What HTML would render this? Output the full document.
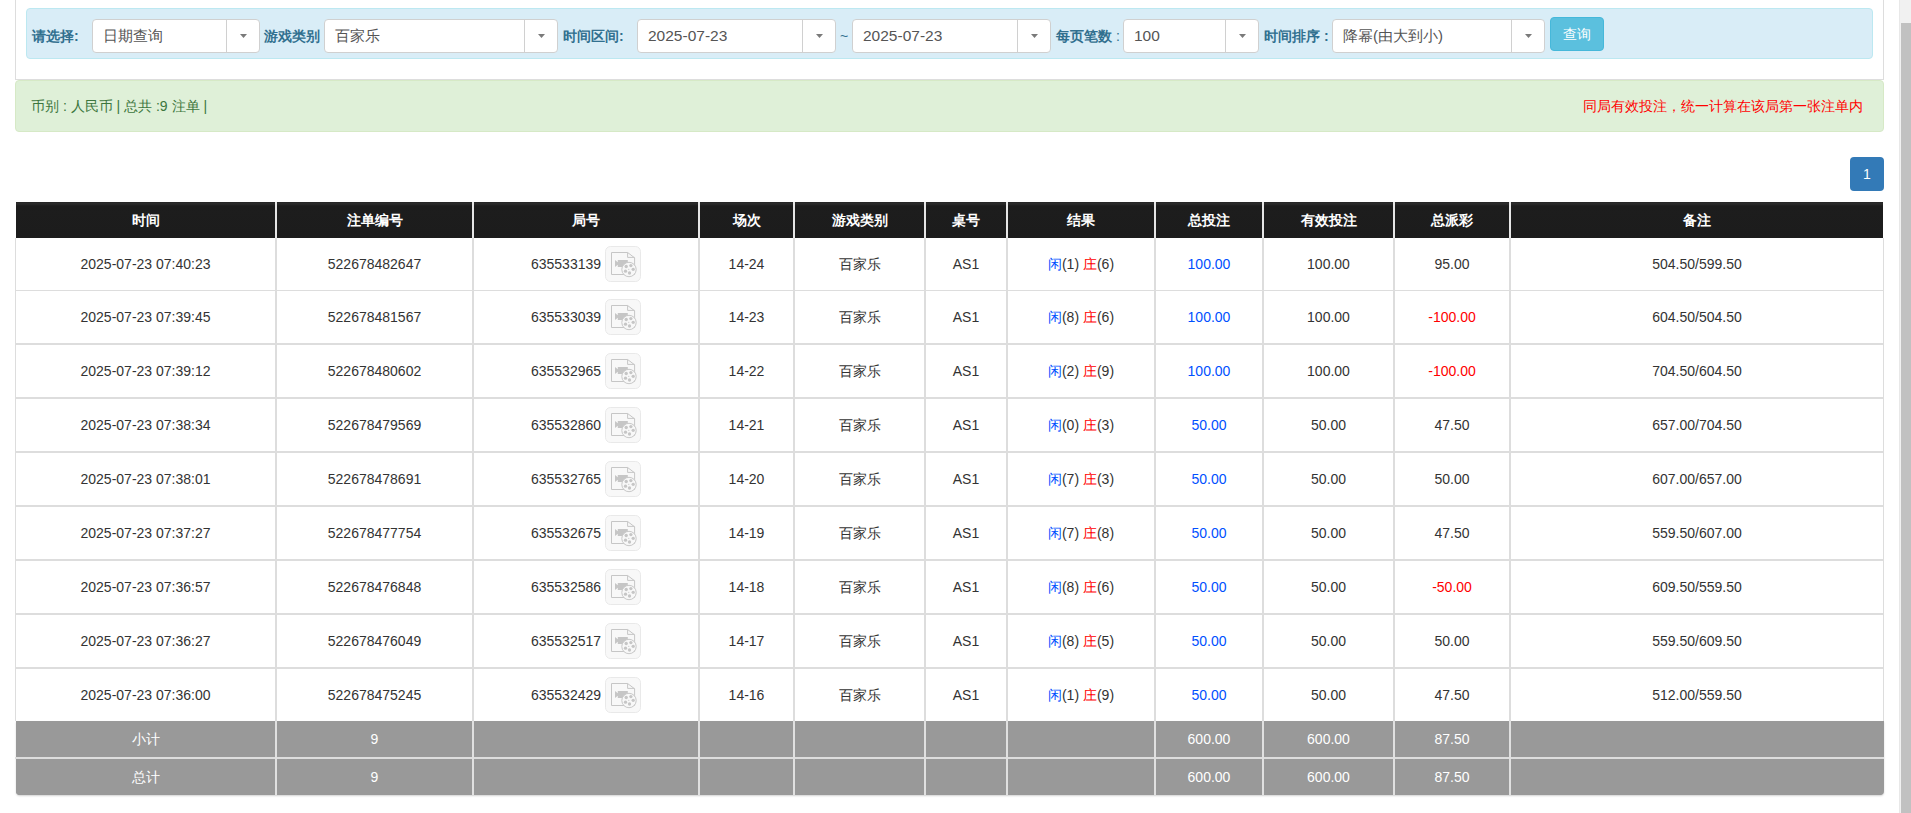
<!DOCTYPE html>
<html><head><meta charset="utf-8"><title>report</title>
<style>
*{box-sizing:border-box}
html,body{margin:0;padding:0}
body{width:1911px;height:813px;overflow:hidden;position:relative;background:#fff;font-family:"Liberation Sans",sans-serif;font-size:14px;color:#333}
.abs{position:absolute}
.panel{left:15px;top:-30px;width:1869px;height:110px;border:1px solid #ddd;border-top:none;background:#fff}
.bar{left:26px;top:8px;width:1847px;height:51px;background:#d9edf7;border:1px solid #bce8f1;border-radius:4px}
.lbl{position:absolute;top:19px;height:34px;line-height:34px;font-weight:bold;color:#31708f;white-space:nowrap}
.sel{position:absolute;top:19px;height:34px;border:1px solid #d0d0d0;border-radius:4px;background:#fff;color:#555}
.sel .t{position:absolute;left:10px;top:0;line-height:32px;white-space:nowrap;font-size:15px}
.sel .d{position:absolute;top:0;bottom:0;width:1px;background:#d0d0d0}
.sel .c{position:absolute;top:14px;display:block}
.btn{left:1550px;top:17px;width:54px;height:34px;background:#5bc0de;border:1px solid #46b8da;border-radius:4px;color:#fff;text-align:center;line-height:32px}
.alert{left:15px;top:80px;width:1869px;height:52px;background:#dff0d8;border:1px solid #d6e9c6;border-radius:4px;color:#3c763d}
.pg{left:1850px;top:157px;width:34px;height:34px;background:#337ab7;border-radius:4px;color:#fff;text-align:center;line-height:34px}
.hd{top:202px;height:36px;background:linear-gradient(#222 0,#2b2b2b 1px,#2a2a2a 2px,#1d1d1d 4px,#1c1c1c);color:#fff;font-weight:bold;text-align:center;line-height:36px;white-space:nowrap}
.cell{height:52px;line-height:52px;text-align:center;white-space:nowrap}
.tot{background:#999;color:#fff;text-align:center;white-space:nowrap;height:36px;line-height:36px}
.vl{background:#ddd}
.b{color:#0050ff}.r{color:#f00}
.ic{display:inline-block;vertical-align:middle;width:36px;height:36px;margin-left:4px;position:relative;top:-1px}
.ic svg{display:block}
.sb{left:1899px;top:0;width:12px;height:813px;background:#f1f1f1;border-left:1px solid #e8e8e8}
.th{left:1901px;top:23px;width:10px;height:800px;background:#c1c1c1}
</style></head><body>

<div class="abs panel"></div>
<div class="abs bar"></div>
<div class="lbl" style="left:32px;">请选择:</div>
<div class="lbl" style="left:264px;">游戏类别</div>
<div class="lbl" style="left:563px;">时间区间:</div>
<div class="lbl" style="left:840px;font-weight:normal;">~</div>
<div class="lbl" style="left:1056px;">每页笔数 <span style="font-weight:normal">:</span></div>
<div class="lbl" style="left:1264px;">时间排序 :</div>
<div class="sel" style="left:92px;width:168px"><span class="t" style="font-size:15px">日期查询</span><span class="d" style="left:133px"></span><svg class="c" style="left:147px" width="7" height="4"><path d="M0 0H7L3.5 4Z" fill="#7a7a7a"/></svg></div>
<div class="sel" style="left:324px;width:234px"><span class="t" style="font-size:15px">百家乐</span><span class="d" style="left:199px"></span><svg class="c" style="left:213px" width="7" height="4"><path d="M0 0H7L3.5 4Z" fill="#7a7a7a"/></svg></div>
<div class="sel" style="left:637px;width:199px"><span class="t" style="font-size:15.5px">2025-07-23</span><span class="d" style="left:164px"></span><svg class="c" style="left:178px" width="7" height="4"><path d="M0 0H7L3.5 4Z" fill="#7a7a7a"/></svg></div>
<div class="sel" style="left:852px;width:199px"><span class="t" style="font-size:15.5px">2025-07-23</span><span class="d" style="left:164px"></span><svg class="c" style="left:178px" width="7" height="4"><path d="M0 0H7L3.5 4Z" fill="#7a7a7a"/></svg></div>
<div class="sel" style="left:1123px;width:136px"><span class="t" style="font-size:15.5px">100</span><span class="d" style="left:101px"></span><svg class="c" style="left:115px" width="7" height="4"><path d="M0 0H7L3.5 4Z" fill="#7a7a7a"/></svg></div>
<div class="sel" style="left:1332px;width:213px"><span class="t" style="font-size:15px">降幂(由大到小)</span><span class="d" style="left:178px"></span><svg class="c" style="left:192px" width="7" height="4"><path d="M0 0H7L3.5 4Z" fill="#7a7a7a"/></svg></div>
<div class="abs btn">查询</div>
<div class="abs alert"><span class="abs" style="left:15px;top:0;line-height:50px">币别 : 人民币 | 总共 :9 注单 |</span><span class="abs r" style="right:20px;top:0;line-height:50px">同局有效投注，统一计算在该局第一张注单内</span></div>
<div class="abs pg">1</div>
<div class="abs hd" style="left:16px;width:259px">时间</div>
<div class="abs hd" style="left:277px;width:195px">注单编号</div>
<div class="abs hd" style="left:474px;width:224px">局号</div>
<div class="abs hd" style="left:700px;width:93px">场次</div>
<div class="abs hd" style="left:795px;width:129px">游戏类别</div>
<div class="abs hd" style="left:926px;width:80px">桌号</div>
<div class="abs hd" style="left:1008px;width:146px">结果</div>
<div class="abs hd" style="left:1156px;width:106px">总投注</div>
<div class="abs hd" style="left:1264px;width:129px">有效投注</div>
<div class="abs hd" style="left:1395px;width:114px">总派彩</div>
<div class="abs hd" style="left:1511px;width:372px">备注</div>
<div class="abs cell" style="left:16px;top:238px;width:259px">2025-07-23 07:40:23</div>
<div class="abs cell" style="left:277px;top:238px;width:195px">522678482647</div>
<div class="abs cell" style="left:474px;top:238px;width:224px">635533139<span class="ic"><svg width="36" height="36" viewBox="0 0 36 36"><rect x="0.5" y="0.5" width="35" height="35" rx="5" fill="#f8f8f8" stroke="#e9e9e9"/><path d="M6.5 6.5H22.6L29.6 11.8V28.5H6.5Z" fill="none" stroke="#c6c6c6"/><path d="M22.6 6.5V11.4H29.6" fill="none" stroke="#c6c6c6"/><path d="M10 14L12.8 16.2V14H22.8V21H12.8V18.8L10 21Z" fill="#c6c6c6"/><circle cx="24" cy="23.5" r="7.2" fill="#f8f8f8" stroke="#c8c8c8"/><g fill="#c6c6c6"><circle cx="21.2" cy="20.5" r="1.65"/><circle cx="25.9" cy="19.6" r="1.65"/><circle cx="28.2" cy="23.3" r="1.65"/><circle cx="24.5" cy="27" r="1.65"/><circle cx="20.5" cy="25.2" r="1.65"/><circle cx="23.8" cy="23.3" r="0.6"/></g></svg></span></div>
<div class="abs cell" style="left:700px;top:238px;width:93px">14-24</div>
<div class="abs cell" style="left:795px;top:238px;width:129px">百家乐</div>
<div class="abs cell" style="left:926px;top:238px;width:80px">AS1</div>
<div class="abs cell" style="left:1008px;top:238px;width:146px"><span class="b">闲</span>(1) <span class="r">庄</span>(6)</div>
<div class="abs cell" style="left:1156px;top:238px;width:106px"><span class="b">100.00</span></div>
<div class="abs cell" style="left:1264px;top:238px;width:129px">100.00</div>
<div class="abs cell" style="left:1395px;top:238px;width:114px">95.00</div>
<div class="abs cell" style="left:1511px;top:238px;width:372px">504.50/599.50</div>
<div class="abs cell" style="left:16px;top:291px;width:259px">2025-07-23 07:39:45</div>
<div class="abs cell" style="left:277px;top:291px;width:195px">522678481567</div>
<div class="abs cell" style="left:474px;top:291px;width:224px">635533039<span class="ic"><svg width="36" height="36" viewBox="0 0 36 36"><rect x="0.5" y="0.5" width="35" height="35" rx="5" fill="#f8f8f8" stroke="#e9e9e9"/><path d="M6.5 6.5H22.6L29.6 11.8V28.5H6.5Z" fill="none" stroke="#c6c6c6"/><path d="M22.6 6.5V11.4H29.6" fill="none" stroke="#c6c6c6"/><path d="M10 14L12.8 16.2V14H22.8V21H12.8V18.8L10 21Z" fill="#c6c6c6"/><circle cx="24" cy="23.5" r="7.2" fill="#f8f8f8" stroke="#c8c8c8"/><g fill="#c6c6c6"><circle cx="21.2" cy="20.5" r="1.65"/><circle cx="25.9" cy="19.6" r="1.65"/><circle cx="28.2" cy="23.3" r="1.65"/><circle cx="24.5" cy="27" r="1.65"/><circle cx="20.5" cy="25.2" r="1.65"/><circle cx="23.8" cy="23.3" r="0.6"/></g></svg></span></div>
<div class="abs cell" style="left:700px;top:291px;width:93px">14-23</div>
<div class="abs cell" style="left:795px;top:291px;width:129px">百家乐</div>
<div class="abs cell" style="left:926px;top:291px;width:80px">AS1</div>
<div class="abs cell" style="left:1008px;top:291px;width:146px"><span class="b">闲</span>(8) <span class="r">庄</span>(6)</div>
<div class="abs cell" style="left:1156px;top:291px;width:106px"><span class="b">100.00</span></div>
<div class="abs cell" style="left:1264px;top:291px;width:129px">100.00</div>
<div class="abs cell" style="left:1395px;top:291px;width:114px"><span class="r">-100.00</span></div>
<div class="abs cell" style="left:1511px;top:291px;width:372px">604.50/504.50</div>
<div class="abs cell" style="left:16px;top:345px;width:259px">2025-07-23 07:39:12</div>
<div class="abs cell" style="left:277px;top:345px;width:195px">522678480602</div>
<div class="abs cell" style="left:474px;top:345px;width:224px">635532965<span class="ic"><svg width="36" height="36" viewBox="0 0 36 36"><rect x="0.5" y="0.5" width="35" height="35" rx="5" fill="#f8f8f8" stroke="#e9e9e9"/><path d="M6.5 6.5H22.6L29.6 11.8V28.5H6.5Z" fill="none" stroke="#c6c6c6"/><path d="M22.6 6.5V11.4H29.6" fill="none" stroke="#c6c6c6"/><path d="M10 14L12.8 16.2V14H22.8V21H12.8V18.8L10 21Z" fill="#c6c6c6"/><circle cx="24" cy="23.5" r="7.2" fill="#f8f8f8" stroke="#c8c8c8"/><g fill="#c6c6c6"><circle cx="21.2" cy="20.5" r="1.65"/><circle cx="25.9" cy="19.6" r="1.65"/><circle cx="28.2" cy="23.3" r="1.65"/><circle cx="24.5" cy="27" r="1.65"/><circle cx="20.5" cy="25.2" r="1.65"/><circle cx="23.8" cy="23.3" r="0.6"/></g></svg></span></div>
<div class="abs cell" style="left:700px;top:345px;width:93px">14-22</div>
<div class="abs cell" style="left:795px;top:345px;width:129px">百家乐</div>
<div class="abs cell" style="left:926px;top:345px;width:80px">AS1</div>
<div class="abs cell" style="left:1008px;top:345px;width:146px"><span class="b">闲</span>(2) <span class="r">庄</span>(9)</div>
<div class="abs cell" style="left:1156px;top:345px;width:106px"><span class="b">100.00</span></div>
<div class="abs cell" style="left:1264px;top:345px;width:129px">100.00</div>
<div class="abs cell" style="left:1395px;top:345px;width:114px"><span class="r">-100.00</span></div>
<div class="abs cell" style="left:1511px;top:345px;width:372px">704.50/604.50</div>
<div class="abs cell" style="left:16px;top:399px;width:259px">2025-07-23 07:38:34</div>
<div class="abs cell" style="left:277px;top:399px;width:195px">522678479569</div>
<div class="abs cell" style="left:474px;top:399px;width:224px">635532860<span class="ic"><svg width="36" height="36" viewBox="0 0 36 36"><rect x="0.5" y="0.5" width="35" height="35" rx="5" fill="#f8f8f8" stroke="#e9e9e9"/><path d="M6.5 6.5H22.6L29.6 11.8V28.5H6.5Z" fill="none" stroke="#c6c6c6"/><path d="M22.6 6.5V11.4H29.6" fill="none" stroke="#c6c6c6"/><path d="M10 14L12.8 16.2V14H22.8V21H12.8V18.8L10 21Z" fill="#c6c6c6"/><circle cx="24" cy="23.5" r="7.2" fill="#f8f8f8" stroke="#c8c8c8"/><g fill="#c6c6c6"><circle cx="21.2" cy="20.5" r="1.65"/><circle cx="25.9" cy="19.6" r="1.65"/><circle cx="28.2" cy="23.3" r="1.65"/><circle cx="24.5" cy="27" r="1.65"/><circle cx="20.5" cy="25.2" r="1.65"/><circle cx="23.8" cy="23.3" r="0.6"/></g></svg></span></div>
<div class="abs cell" style="left:700px;top:399px;width:93px">14-21</div>
<div class="abs cell" style="left:795px;top:399px;width:129px">百家乐</div>
<div class="abs cell" style="left:926px;top:399px;width:80px">AS1</div>
<div class="abs cell" style="left:1008px;top:399px;width:146px"><span class="b">闲</span>(0) <span class="r">庄</span>(3)</div>
<div class="abs cell" style="left:1156px;top:399px;width:106px"><span class="b">50.00</span></div>
<div class="abs cell" style="left:1264px;top:399px;width:129px">50.00</div>
<div class="abs cell" style="left:1395px;top:399px;width:114px">47.50</div>
<div class="abs cell" style="left:1511px;top:399px;width:372px">657.00/704.50</div>
<div class="abs cell" style="left:16px;top:453px;width:259px">2025-07-23 07:38:01</div>
<div class="abs cell" style="left:277px;top:453px;width:195px">522678478691</div>
<div class="abs cell" style="left:474px;top:453px;width:224px">635532765<span class="ic"><svg width="36" height="36" viewBox="0 0 36 36"><rect x="0.5" y="0.5" width="35" height="35" rx="5" fill="#f8f8f8" stroke="#e9e9e9"/><path d="M6.5 6.5H22.6L29.6 11.8V28.5H6.5Z" fill="none" stroke="#c6c6c6"/><path d="M22.6 6.5V11.4H29.6" fill="none" stroke="#c6c6c6"/><path d="M10 14L12.8 16.2V14H22.8V21H12.8V18.8L10 21Z" fill="#c6c6c6"/><circle cx="24" cy="23.5" r="7.2" fill="#f8f8f8" stroke="#c8c8c8"/><g fill="#c6c6c6"><circle cx="21.2" cy="20.5" r="1.65"/><circle cx="25.9" cy="19.6" r="1.65"/><circle cx="28.2" cy="23.3" r="1.65"/><circle cx="24.5" cy="27" r="1.65"/><circle cx="20.5" cy="25.2" r="1.65"/><circle cx="23.8" cy="23.3" r="0.6"/></g></svg></span></div>
<div class="abs cell" style="left:700px;top:453px;width:93px">14-20</div>
<div class="abs cell" style="left:795px;top:453px;width:129px">百家乐</div>
<div class="abs cell" style="left:926px;top:453px;width:80px">AS1</div>
<div class="abs cell" style="left:1008px;top:453px;width:146px"><span class="b">闲</span>(7) <span class="r">庄</span>(3)</div>
<div class="abs cell" style="left:1156px;top:453px;width:106px"><span class="b">50.00</span></div>
<div class="abs cell" style="left:1264px;top:453px;width:129px">50.00</div>
<div class="abs cell" style="left:1395px;top:453px;width:114px">50.00</div>
<div class="abs cell" style="left:1511px;top:453px;width:372px">607.00/657.00</div>
<div class="abs cell" style="left:16px;top:507px;width:259px">2025-07-23 07:37:27</div>
<div class="abs cell" style="left:277px;top:507px;width:195px">522678477754</div>
<div class="abs cell" style="left:474px;top:507px;width:224px">635532675<span class="ic"><svg width="36" height="36" viewBox="0 0 36 36"><rect x="0.5" y="0.5" width="35" height="35" rx="5" fill="#f8f8f8" stroke="#e9e9e9"/><path d="M6.5 6.5H22.6L29.6 11.8V28.5H6.5Z" fill="none" stroke="#c6c6c6"/><path d="M22.6 6.5V11.4H29.6" fill="none" stroke="#c6c6c6"/><path d="M10 14L12.8 16.2V14H22.8V21H12.8V18.8L10 21Z" fill="#c6c6c6"/><circle cx="24" cy="23.5" r="7.2" fill="#f8f8f8" stroke="#c8c8c8"/><g fill="#c6c6c6"><circle cx="21.2" cy="20.5" r="1.65"/><circle cx="25.9" cy="19.6" r="1.65"/><circle cx="28.2" cy="23.3" r="1.65"/><circle cx="24.5" cy="27" r="1.65"/><circle cx="20.5" cy="25.2" r="1.65"/><circle cx="23.8" cy="23.3" r="0.6"/></g></svg></span></div>
<div class="abs cell" style="left:700px;top:507px;width:93px">14-19</div>
<div class="abs cell" style="left:795px;top:507px;width:129px">百家乐</div>
<div class="abs cell" style="left:926px;top:507px;width:80px">AS1</div>
<div class="abs cell" style="left:1008px;top:507px;width:146px"><span class="b">闲</span>(7) <span class="r">庄</span>(8)</div>
<div class="abs cell" style="left:1156px;top:507px;width:106px"><span class="b">50.00</span></div>
<div class="abs cell" style="left:1264px;top:507px;width:129px">50.00</div>
<div class="abs cell" style="left:1395px;top:507px;width:114px">47.50</div>
<div class="abs cell" style="left:1511px;top:507px;width:372px">559.50/607.00</div>
<div class="abs cell" style="left:16px;top:561px;width:259px">2025-07-23 07:36:57</div>
<div class="abs cell" style="left:277px;top:561px;width:195px">522678476848</div>
<div class="abs cell" style="left:474px;top:561px;width:224px">635532586<span class="ic"><svg width="36" height="36" viewBox="0 0 36 36"><rect x="0.5" y="0.5" width="35" height="35" rx="5" fill="#f8f8f8" stroke="#e9e9e9"/><path d="M6.5 6.5H22.6L29.6 11.8V28.5H6.5Z" fill="none" stroke="#c6c6c6"/><path d="M22.6 6.5V11.4H29.6" fill="none" stroke="#c6c6c6"/><path d="M10 14L12.8 16.2V14H22.8V21H12.8V18.8L10 21Z" fill="#c6c6c6"/><circle cx="24" cy="23.5" r="7.2" fill="#f8f8f8" stroke="#c8c8c8"/><g fill="#c6c6c6"><circle cx="21.2" cy="20.5" r="1.65"/><circle cx="25.9" cy="19.6" r="1.65"/><circle cx="28.2" cy="23.3" r="1.65"/><circle cx="24.5" cy="27" r="1.65"/><circle cx="20.5" cy="25.2" r="1.65"/><circle cx="23.8" cy="23.3" r="0.6"/></g></svg></span></div>
<div class="abs cell" style="left:700px;top:561px;width:93px">14-18</div>
<div class="abs cell" style="left:795px;top:561px;width:129px">百家乐</div>
<div class="abs cell" style="left:926px;top:561px;width:80px">AS1</div>
<div class="abs cell" style="left:1008px;top:561px;width:146px"><span class="b">闲</span>(8) <span class="r">庄</span>(6)</div>
<div class="abs cell" style="left:1156px;top:561px;width:106px"><span class="b">50.00</span></div>
<div class="abs cell" style="left:1264px;top:561px;width:129px">50.00</div>
<div class="abs cell" style="left:1395px;top:561px;width:114px"><span class="r">-50.00</span></div>
<div class="abs cell" style="left:1511px;top:561px;width:372px">609.50/559.50</div>
<div class="abs cell" style="left:16px;top:615px;width:259px">2025-07-23 07:36:27</div>
<div class="abs cell" style="left:277px;top:615px;width:195px">522678476049</div>
<div class="abs cell" style="left:474px;top:615px;width:224px">635532517<span class="ic"><svg width="36" height="36" viewBox="0 0 36 36"><rect x="0.5" y="0.5" width="35" height="35" rx="5" fill="#f8f8f8" stroke="#e9e9e9"/><path d="M6.5 6.5H22.6L29.6 11.8V28.5H6.5Z" fill="none" stroke="#c6c6c6"/><path d="M22.6 6.5V11.4H29.6" fill="none" stroke="#c6c6c6"/><path d="M10 14L12.8 16.2V14H22.8V21H12.8V18.8L10 21Z" fill="#c6c6c6"/><circle cx="24" cy="23.5" r="7.2" fill="#f8f8f8" stroke="#c8c8c8"/><g fill="#c6c6c6"><circle cx="21.2" cy="20.5" r="1.65"/><circle cx="25.9" cy="19.6" r="1.65"/><circle cx="28.2" cy="23.3" r="1.65"/><circle cx="24.5" cy="27" r="1.65"/><circle cx="20.5" cy="25.2" r="1.65"/><circle cx="23.8" cy="23.3" r="0.6"/></g></svg></span></div>
<div class="abs cell" style="left:700px;top:615px;width:93px">14-17</div>
<div class="abs cell" style="left:795px;top:615px;width:129px">百家乐</div>
<div class="abs cell" style="left:926px;top:615px;width:80px">AS1</div>
<div class="abs cell" style="left:1008px;top:615px;width:146px"><span class="b">闲</span>(8) <span class="r">庄</span>(5)</div>
<div class="abs cell" style="left:1156px;top:615px;width:106px"><span class="b">50.00</span></div>
<div class="abs cell" style="left:1264px;top:615px;width:129px">50.00</div>
<div class="abs cell" style="left:1395px;top:615px;width:114px">50.00</div>
<div class="abs cell" style="left:1511px;top:615px;width:372px">559.50/609.50</div>
<div class="abs cell" style="left:16px;top:669px;width:259px">2025-07-23 07:36:00</div>
<div class="abs cell" style="left:277px;top:669px;width:195px">522678475245</div>
<div class="abs cell" style="left:474px;top:669px;width:224px">635532429<span class="ic"><svg width="36" height="36" viewBox="0 0 36 36"><rect x="0.5" y="0.5" width="35" height="35" rx="5" fill="#f8f8f8" stroke="#e9e9e9"/><path d="M6.5 6.5H22.6L29.6 11.8V28.5H6.5Z" fill="none" stroke="#c6c6c6"/><path d="M22.6 6.5V11.4H29.6" fill="none" stroke="#c6c6c6"/><path d="M10 14L12.8 16.2V14H22.8V21H12.8V18.8L10 21Z" fill="#c6c6c6"/><circle cx="24" cy="23.5" r="7.2" fill="#f8f8f8" stroke="#c8c8c8"/><g fill="#c6c6c6"><circle cx="21.2" cy="20.5" r="1.65"/><circle cx="25.9" cy="19.6" r="1.65"/><circle cx="28.2" cy="23.3" r="1.65"/><circle cx="24.5" cy="27" r="1.65"/><circle cx="20.5" cy="25.2" r="1.65"/><circle cx="23.8" cy="23.3" r="0.6"/></g></svg></span></div>
<div class="abs cell" style="left:700px;top:669px;width:93px">14-16</div>
<div class="abs cell" style="left:795px;top:669px;width:129px">百家乐</div>
<div class="abs cell" style="left:926px;top:669px;width:80px">AS1</div>
<div class="abs cell" style="left:1008px;top:669px;width:146px"><span class="b">闲</span>(1) <span class="r">庄</span>(9)</div>
<div class="abs cell" style="left:1156px;top:669px;width:106px"><span class="b">50.00</span></div>
<div class="abs cell" style="left:1264px;top:669px;width:129px">50.00</div>
<div class="abs cell" style="left:1395px;top:669px;width:114px">47.50</div>
<div class="abs cell" style="left:1511px;top:669px;width:372px">512.00/559.50</div>
<div class="abs vl" style="left:15px;top:290px;width:1869px;height:1px"></div>
<div class="abs vl" style="left:15px;top:343px;width:1869px;height:2px"></div>
<div class="abs vl" style="left:15px;top:397px;width:1869px;height:2px"></div>
<div class="abs vl" style="left:15px;top:451px;width:1869px;height:2px"></div>
<div class="abs vl" style="left:15px;top:505px;width:1869px;height:2px"></div>
<div class="abs vl" style="left:15px;top:559px;width:1869px;height:2px"></div>
<div class="abs vl" style="left:15px;top:613px;width:1869px;height:2px"></div>
<div class="abs vl" style="left:15px;top:667px;width:1869px;height:2px"></div>
<div class="abs vl" style="left:15px;top:238px;width:1px;height:483px"></div>
<div class="abs vl" style="left:275px;top:238px;width:2px;height:483px"></div>
<div class="abs vl" style="left:472px;top:238px;width:2px;height:483px"></div>
<div class="abs vl" style="left:698px;top:238px;width:2px;height:483px"></div>
<div class="abs vl" style="left:793px;top:238px;width:2px;height:483px"></div>
<div class="abs vl" style="left:924px;top:238px;width:2px;height:483px"></div>
<div class="abs vl" style="left:1006px;top:238px;width:2px;height:483px"></div>
<div class="abs vl" style="left:1154px;top:238px;width:2px;height:483px"></div>
<div class="abs vl" style="left:1262px;top:238px;width:2px;height:483px"></div>
<div class="abs vl" style="left:1393px;top:238px;width:2px;height:483px"></div>
<div class="abs vl" style="left:1509px;top:238px;width:2px;height:483px"></div>
<div class="abs vl" style="left:1883px;top:238px;width:1px;height:483px"></div>
<div class="abs" style="left:275px;top:202px;width:2px;height:36px;background:#e6e6e6"></div>
<div class="abs" style="left:472px;top:202px;width:2px;height:36px;background:#e6e6e6"></div>
<div class="abs" style="left:698px;top:202px;width:2px;height:36px;background:#e6e6e6"></div>
<div class="abs" style="left:793px;top:202px;width:2px;height:36px;background:#e6e6e6"></div>
<div class="abs" style="left:924px;top:202px;width:2px;height:36px;background:#e6e6e6"></div>
<div class="abs" style="left:1006px;top:202px;width:2px;height:36px;background:#e6e6e6"></div>
<div class="abs" style="left:1154px;top:202px;width:2px;height:36px;background:#e6e6e6"></div>
<div class="abs" style="left:1262px;top:202px;width:2px;height:36px;background:#e6e6e6"></div>
<div class="abs" style="left:1393px;top:202px;width:2px;height:36px;background:#e6e6e6"></div>
<div class="abs" style="left:1509px;top:202px;width:2px;height:36px;background:#e6e6e6"></div>
<div class="abs" style="left:16px;top:721px;width:1868px;height:74px;border-radius:0 0 4px 4px;box-shadow:0 1px 2px rgba(0,0,0,.18);background:#999"></div>
<div class="abs tot" style="left:16px;top:721px;width:259px;">小计</div>
<div class="abs tot" style="left:277px;top:721px;width:195px;">9</div>
<div class="abs tot" style="left:474px;top:721px;width:224px;"></div>
<div class="abs tot" style="left:700px;top:721px;width:93px;"></div>
<div class="abs tot" style="left:795px;top:721px;width:129px;"></div>
<div class="abs tot" style="left:926px;top:721px;width:80px;"></div>
<div class="abs tot" style="left:1008px;top:721px;width:146px;"></div>
<div class="abs tot" style="left:1156px;top:721px;width:106px;">600.00</div>
<div class="abs tot" style="left:1264px;top:721px;width:129px;">600.00</div>
<div class="abs tot" style="left:1395px;top:721px;width:114px;">87.50</div>
<div class="abs tot" style="left:1511px;top:721px;width:372px;"></div>
<div class="abs tot" style="left:16px;top:759px;width:259px;border-bottom-left-radius:4px;">总计</div>
<div class="abs tot" style="left:277px;top:759px;width:195px;">9</div>
<div class="abs tot" style="left:474px;top:759px;width:224px;"></div>
<div class="abs tot" style="left:700px;top:759px;width:93px;"></div>
<div class="abs tot" style="left:795px;top:759px;width:129px;"></div>
<div class="abs tot" style="left:926px;top:759px;width:80px;"></div>
<div class="abs tot" style="left:1008px;top:759px;width:146px;"></div>
<div class="abs tot" style="left:1156px;top:759px;width:106px;">600.00</div>
<div class="abs tot" style="left:1264px;top:759px;width:129px;">600.00</div>
<div class="abs tot" style="left:1395px;top:759px;width:114px;">87.50</div>
<div class="abs tot" style="left:1511px;top:759px;width:372px;border-bottom-right-radius:4px;"></div>
<div class="abs" style="left:15px;top:757px;width:1869px;height:2px;background:#ddd"></div>
<div class="abs" style="left:275px;top:721px;width:2px;height:74px;background:#e0e0e0"></div>
<div class="abs" style="left:472px;top:721px;width:2px;height:74px;background:#e0e0e0"></div>
<div class="abs" style="left:698px;top:721px;width:2px;height:74px;background:#e0e0e0"></div>
<div class="abs" style="left:793px;top:721px;width:2px;height:74px;background:#e0e0e0"></div>
<div class="abs" style="left:924px;top:721px;width:2px;height:74px;background:#e0e0e0"></div>
<div class="abs" style="left:1006px;top:721px;width:2px;height:74px;background:#e0e0e0"></div>
<div class="abs" style="left:1154px;top:721px;width:2px;height:74px;background:#e0e0e0"></div>
<div class="abs" style="left:1262px;top:721px;width:2px;height:74px;background:#e0e0e0"></div>
<div class="abs" style="left:1393px;top:721px;width:2px;height:74px;background:#e0e0e0"></div>
<div class="abs" style="left:1509px;top:721px;width:2px;height:74px;background:#e0e0e0"></div>
<div class="abs sb"></div><div class="abs th"></div>
</body></html>
